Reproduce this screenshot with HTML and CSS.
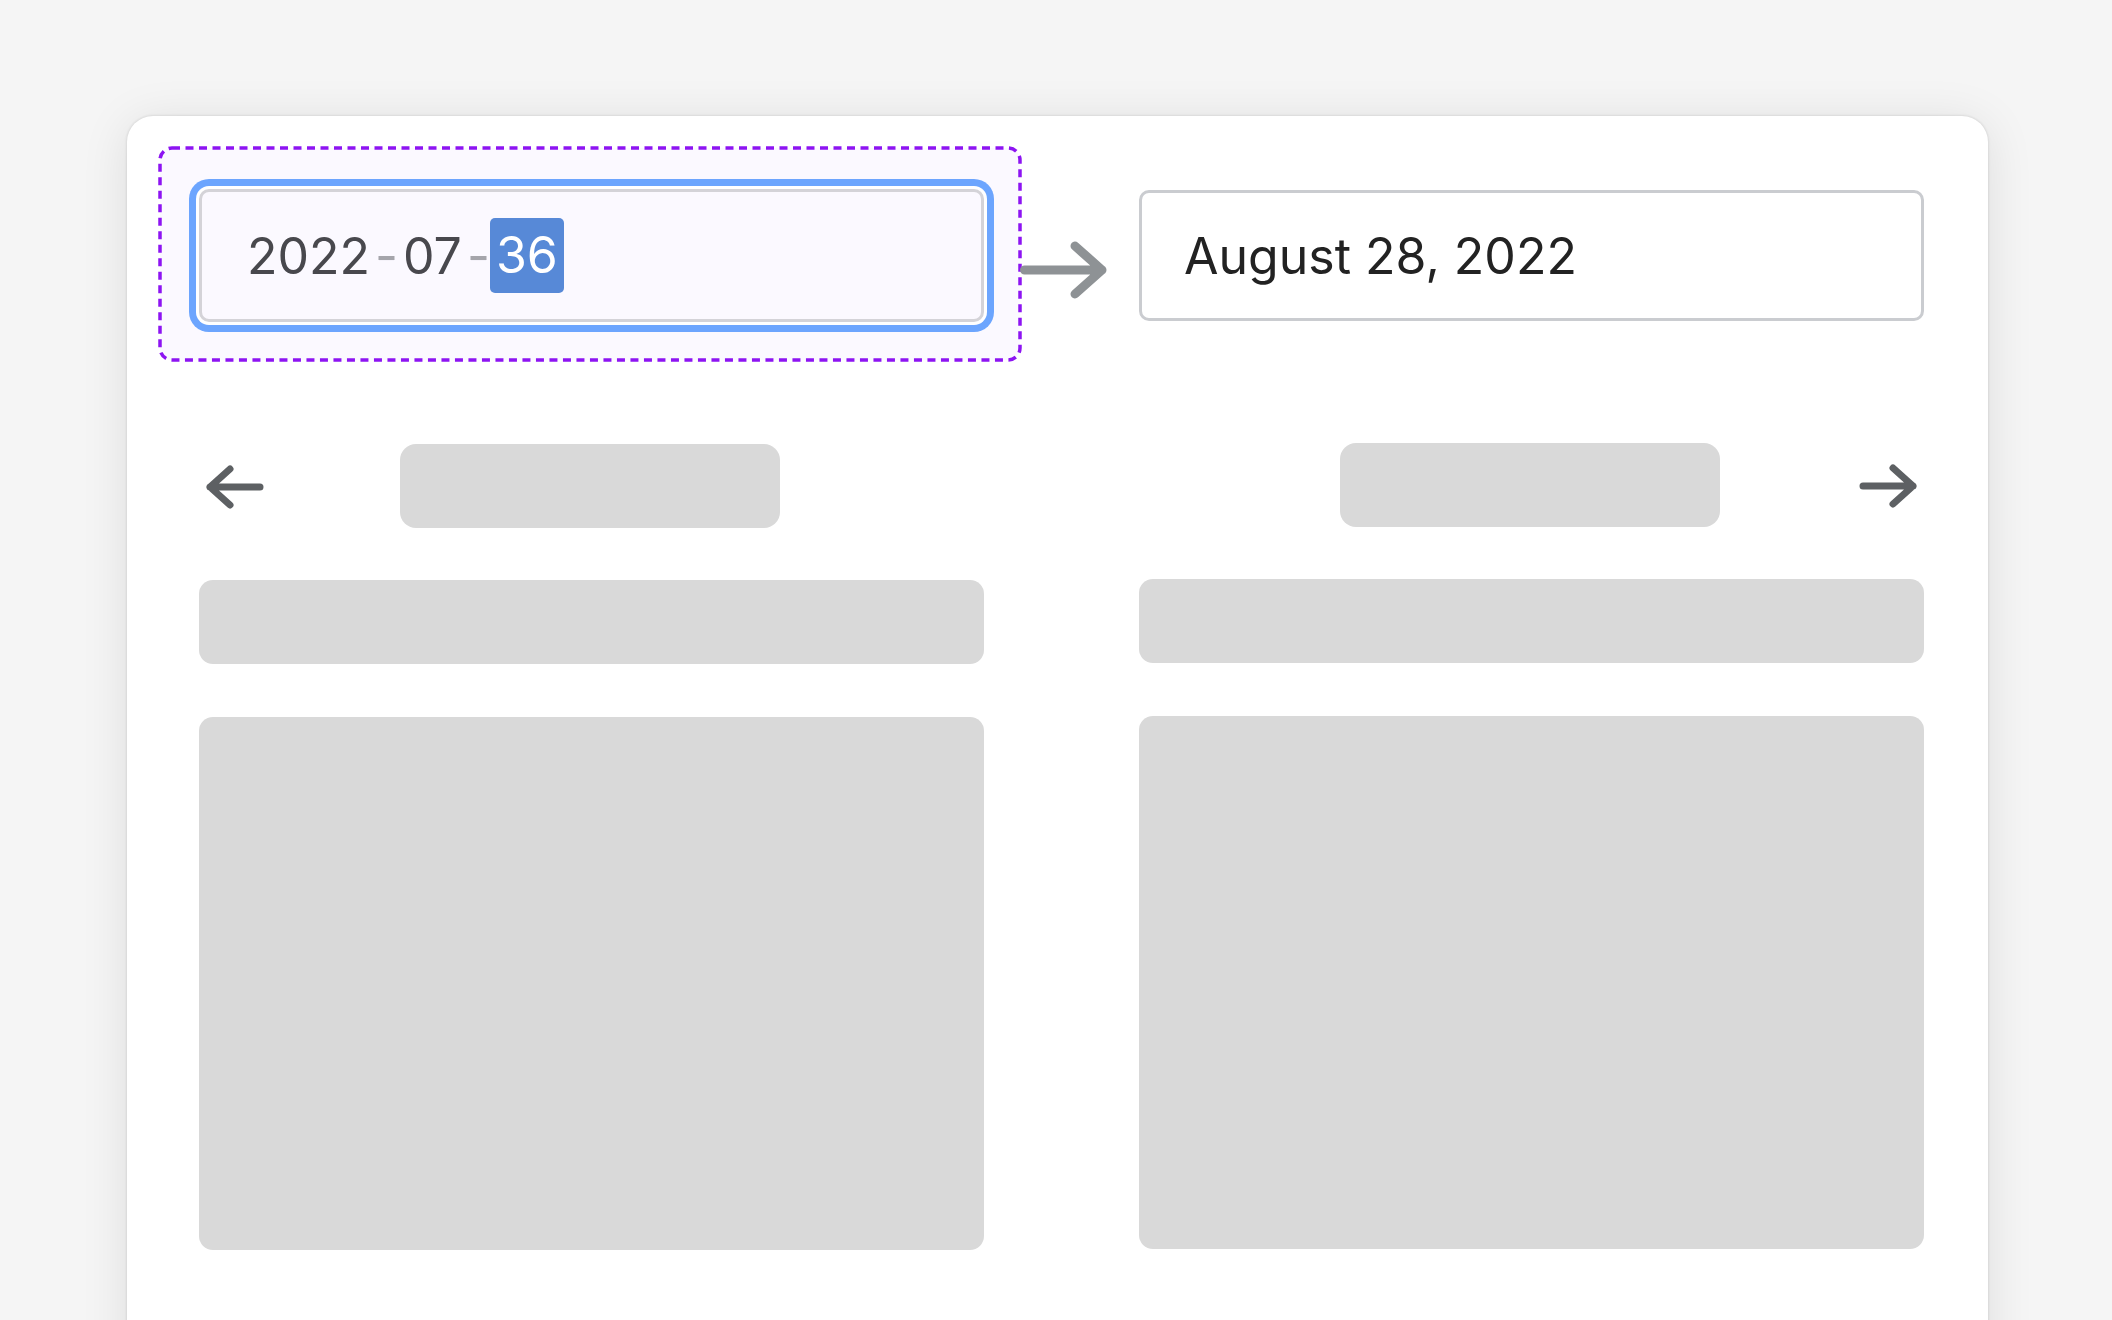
FILE: index.html
```html
<!DOCTYPE html>
<html lang="en">
<head>
<meta charset="utf-8">
<title>Date range picker</title>
<link rel="stylesheet" href="styles.css">
</head>
<body>
<div class="card">
  <svg class="connector" width="96" height="64" viewBox="0 0 96 64" aria-hidden="true">
    <path d="M10.5 32 H88 M61 8 L88 32 L61 56" fill="none" stroke="#8e9295" stroke-width="9" stroke-linecap="round" stroke-linejoin="round"/>
  </svg>
  <div class="col">
    <div class="focus-wrap">
      <svg class="focus-frame" width="866" height="220" aria-hidden="true">
        <rect class="focus-rect" x="2" y="2" rx="12" ry="12"/>
      </svg>
      <div class="input input-active">
        <span class="seg">2022</span><span class="sep">-</span><span class="seg">07</span><span class="sep">-</span><span class="seg seg-sel">36</span>
      </div>
    </div>
    <div class="nav">
      <button class="nav-btn nav-prev" aria-label="Previous month">
        <svg width="58" height="44" viewBox="0 0 58 44"><path d="M54 22 H4 M24 4 L4 22 L24 40" fill="none" stroke="#5d6063" stroke-width="7" stroke-linecap="round" stroke-linejoin="round"/></svg>
      </button>
      <div class="pill"></div>
      <div></div>
    </div>
    <div class="bar"></div>
    <div class="block"></div>
  </div>
  <div class="col">
    <div class="input input-plain">August 28, 2022</div>
    <div class="nav">
      <div></div>
      <div class="pill"></div>
      <button class="nav-btn nav-next" aria-label="Next month">
        <svg width="58" height="44" viewBox="0 0 58 44"><path d="M4 22 H54 M34 4 L54 22 L34 40" fill="none" stroke="#5d6063" stroke-width="7" stroke-linecap="round" stroke-linejoin="round"/></svg>
      </button>
    </div>
    <div class="bar"></div>
    <div class="block"></div>
  </div>
</div>
</body>
</html>
```

FILE: styles.css
```css
html, body {
  margin: 0;
  padding: 0;
  background: #f5f5f5;
  overflow: hidden;
  height: 100%;
}

body {
  font-family: Inter, "Noto Sans", sans-serif;
}

.card {
  position: relative;
  margin: 116px 0 0 127px;
  width: 1861px;
  height: 1300px;
  box-sizing: border-box;
  background: #ffffff;
  border-radius: 26px;
  box-shadow: 0 0 3px rgba(0, 0, 0, 0.16), 0 6px 48px rgba(0, 0, 0, 0.1);
  padding: 73px 0 0 72px;
  display: grid;
  grid-template-columns: 785px 785px;
  column-gap: 155px;
  align-items: start;
}

.col {
  display: flex;
  flex-direction: column;
}

.connector {
  position: absolute;
  left: 887px;
  top: 122px;
  z-index: 2;
}

.focus-wrap {
  position: relative;
  z-index: 0;
}

.focus-frame {
  position: absolute;
  top: -43px;
  left: -41px;
  z-index: -1;
  overflow: visible;
}

.focus-rect {
  width: 860px;
  height: 212px;
  fill: #fbf9ff;
  stroke: #8d14f2;
  stroke-width: 3.5;
  stroke-dasharray: 8 5.5;
}

.input {
  height: 133px;
  box-sizing: border-box;
  border: 3px solid #caccd0;
  border-radius: 10px;
  display: flex;
  align-items: center;
  padding-left: 42px;
  font-size: 50px;
  letter-spacing: 0;
}

.input-active {
  border-color: #d4d3d8;
  background: #fbf9ff;
  color: #48484d;
  box-shadow: 0 0 0 3px #ffffff, 0 0 0 10px #6ca5fe;
  padding-left: 45px;
}

.input-plain {
  background: #ffffff;
  color: #222222;
  margin-top: 1px;
  height: 131px;
}

.seg {
  display: inline-block;
}

.sep {
  display: inline-block;
  color: #a5a5ab;
  padding: 0 5px;
}

.seg-sel {
  background: #5789d7;
  color: #ffffff;
  border-radius: 5px;
  height: 75px;
  line-height: 75px;
  padding: 0 6px;
  margin-left: -5px;
}

.nav {
  margin-top: 122px;
  display: grid;
  grid-template-columns: 1fr auto 1fr;
  align-items: center;
  height: 84px;
}

.nav-btn {
  border: 0;
  background: none;
  padding: 0;
  margin: 0;
  display: flex;
  cursor: pointer;
}

.nav-btn svg {
  display: block;
}

.nav-prev {
  justify-self: start;
  margin-left: 7px;
  margin-top: 2px;
}

.nav-next {
  justify-self: end;
  margin-right: 7px;
  margin-top: 2px;
}

.pill {
  width: 380px;
  height: 84px;
  border-radius: 16px;
  background: #d9d9d9;
  margin-left: -3px;
}

.bar {
  margin-top: 52px;
  height: 84px;
  border-radius: 14px;
  background: #d9d9d9;
}

.block {
  margin-top: 53px;
  height: 533px;
  border-radius: 14px;
  background: #d9d9d9;
}
```
